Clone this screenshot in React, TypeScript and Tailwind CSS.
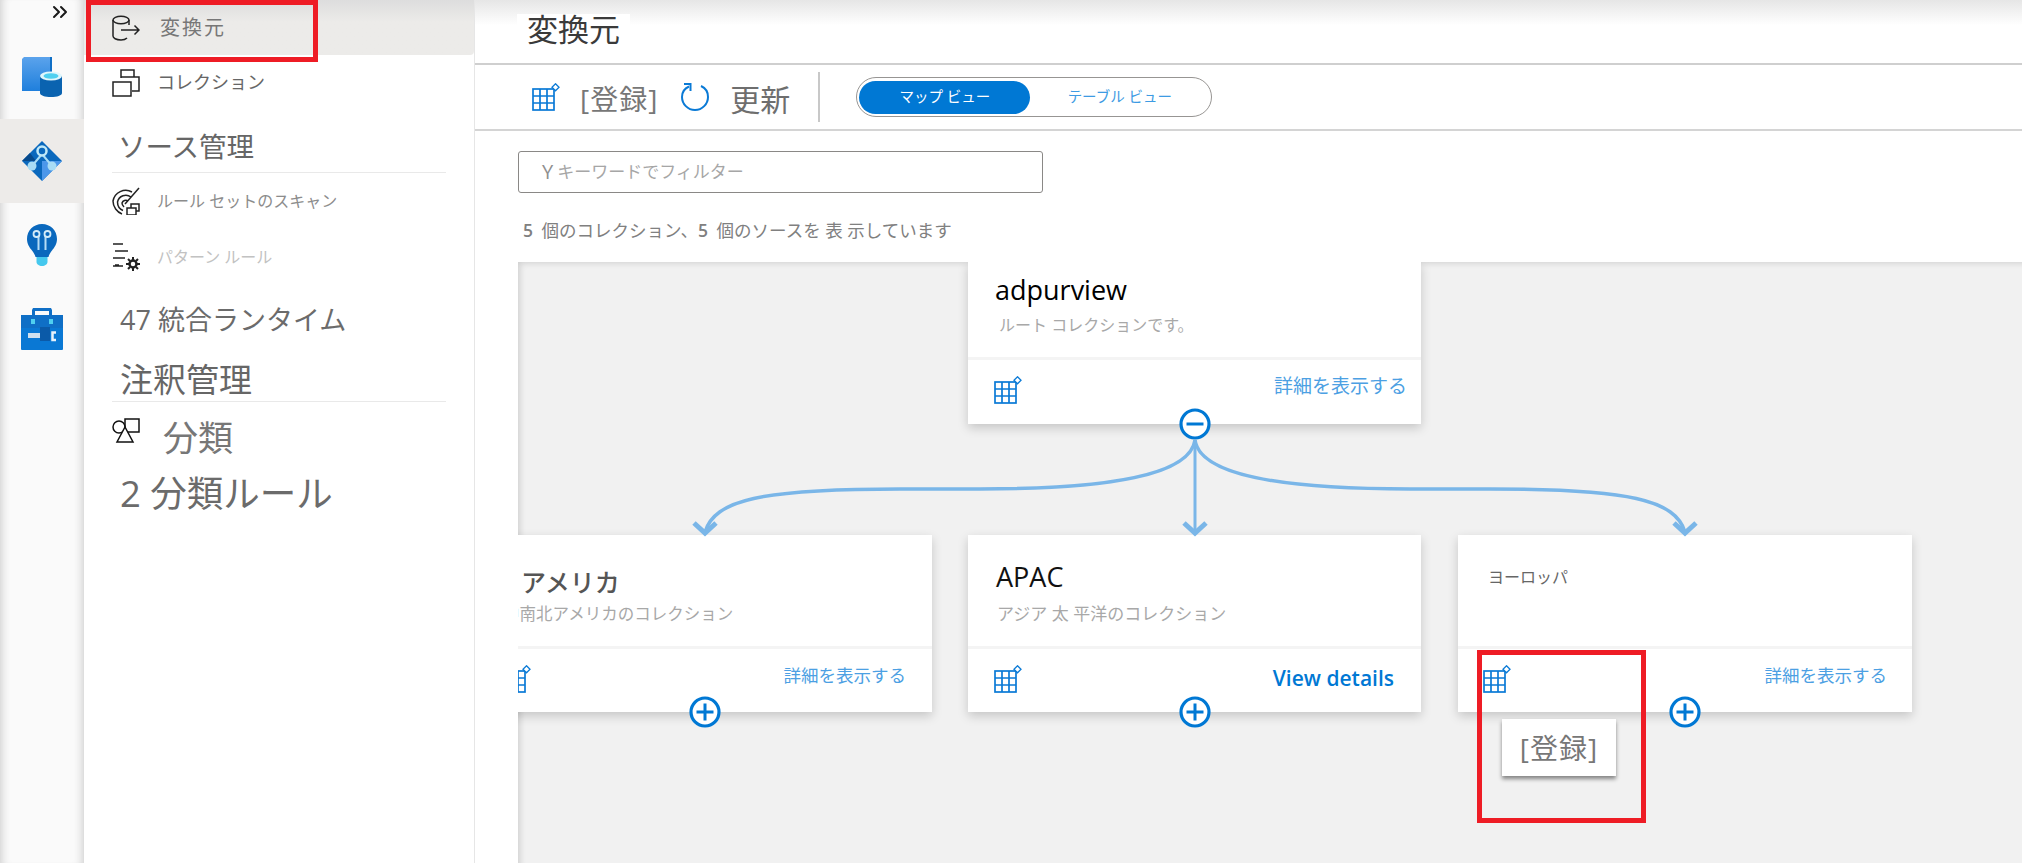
import React from "react";
import { ChevronsRight } from "lucide-react";

/* Small drawings */
const GridIcon = () => (
  <svg width="28" height="28" viewBox="0 0 28 28" fill="none" stroke="#0a7ad6" strokeWidth="1.700">
    <rect x="1" y="6" width="21" height="21" />
    <path d="M8 6v21M15 6v21M1 13h21M1 20h21" />
    <path d="M23.500 0.800l3.500 3.500-3.500 3.500-3.500-3.500z" strokeWidth="1.300" fill="#fff" />
  </svg>
);

const CircleBtn = ({ minus }: { minus?: boolean }) => (
  <svg width="32" height="32" viewBox="0 0 32 32" fill="none">
    <circle cx="16" cy="16" r="14" fill="#fff" stroke="#0078d4" strokeWidth="3.200" />
    <path d={minus ? "M7.500 16h17" : "M7.500 16h17M16 7.500v17"} stroke="#0078d4" strokeWidth="3" />
  </svg>
);

const BookDb = () => (
  <svg width="42" height="42" viewBox="0 0 42 42">
    <defs>
      <linearGradient id="bk" x1="0" y1="0" x2="0" y2="1">
        <stop offset="0" stopColor="#5ba3ec" />
        <stop offset="1" stopColor="#1f7fdc" />
      </linearGradient>
    </defs>
    <path d="M1 3l2-2h26v34H1z" fill="url(#bk)" />
    <path d="M29 1h2v24h-2z" fill="#0f6fc6" />
    <path d="M19 20v17c0 2.500 5 4 11 4s11-1.500 11-4V20z" fill="#0a63b0" />
    <ellipse cx="30" cy="20" rx="11" ry="4.500" fill="#dff6fc" />
    <ellipse cx="30" cy="20" rx="7.500" ry="2.800" fill="#4fd0f0" />
  </svg>
);

const DiamondIcon = () => (
  <svg width="42" height="42" viewBox="0 0 42 42">
    <path d="M21 1l20 20-20 20L1 21z" fill="#0a68bd" />
    <path d="M21 21l20 0-20 20z" fill="#4c97ea" />
    <path d="M1 21l8-8 6 8z" fill="#074a8c" />
    <path d="M21 14L11 26M21 14l10 12" stroke="#a8dcf5" strokeWidth="2" fill="none" />
    <circle cx="21" cy="11" r="4.500" fill="#0a68bd" stroke="#bfe8f8" strokeWidth="2.500" />
    <circle cx="11" cy="26" r="4.500" fill="#a8dcf5" />
    <circle cx="31" cy="26" r="4.500" fill="#a8dcf5" />
  </svg>
);

const BulbIcon = () => (
  <svg width="30" height="42" viewBox="0 0 30 42">
    <path d="M15 0C6.500 0 0 6.500 0 15c0 5 2.500 8.500 5 11.500 2 2.500 3 4.500 3.500 6.500h13c.5-2 1.500-4 3.500-6.500 2.500-3 5-6.500 5-11.500C30 6.500 23.500 0 15 0z" fill="#0a68bd" />
    <path d="M9.500 33h11v5c0 2-2.500 4-5.500 4s-5.500-2-5.500-4z" fill="#45c8ee" />
    <path d="M11.500 12v14M18.500 12v14" stroke="#b5dcf5" strokeWidth="2" />
    <circle cx="9.500" cy="10" r="3" fill="none" stroke="#d5ecf9" strokeWidth="1.800" />
    <circle cx="20.500" cy="10" r="3" fill="none" stroke="#d5ecf9" strokeWidth="1.800" />
  </svg>
);

const ToolboxIcon = () => (
  <svg width="42" height="42" viewBox="0 0 42 42">
    <path d="M11 7V2l1-2h18l1 2v5h-3V3H14v4z" fill="#0f6fc6" />
    <rect x="0" y="7" width="42" height="35" rx="1" fill="#0a78d4" />
    <rect x="0" y="7" width="42" height="13" fill="#0f6fc6" />
    <rect x="19" y="19" width="10" height="14" fill="#0b5aa8" />
    <rect x="10" y="11" width="4" height="5" fill="#4fd0f0" />
    <rect x="28" y="11" width="4" height="5" fill="#4fd0f0" />
    <rect x="7" y="25" width="12" height="5" fill="#cfe0ef" />
    <path d="M35 24.500h-3.500v7.500h3.500" fill="none" stroke="#e8f2fa" strokeWidth="2.500" />
  </svg>
);

const SourceIcon = () => (
  <svg width="28" height="26" viewBox="0 0 28 26" fill="none" stroke="#222" strokeWidth="1.500">
    <path d="M1 5v16c0 2 3 4 8 4 3 0 5-1 6-2" />
    <path d="M17 10V5" />
    <ellipse cx="9" cy="5" rx="8" ry="3.800" />
    <path d="M9 15h18M22.500 10.500L27 15l-4.500 4.500" />
  </svg>
);

const CollectionIcon = () => (
  <svg width="28" height="28" viewBox="0 0 28 28" fill="none" stroke="#222" strokeWidth="1.500">
    <path d="M9 9V1h13v7" />
    <path d="M9 8h18v14h-7" />
    <rect x="1" y="13" width="18" height="14" />
  </svg>
);

const ScanIcon = () => (
  <svg width="28" height="28" viewBox="0 0 28 28" fill="none" stroke="#222" strokeWidth="1.500">
    <path d="M20 5A13 13 0 0 0 1 14c0 6 4 11 9 13" />
    <path d="M19 10A8.500 8.500 0 0 0 5.500 15c0 4 2 7 5.500 8.500" />
    <path d="M16 14a4 4 0 0 0-6 2c0 2 1 3 2 4" />
    <path d="M13 17L27 1" />
    <rect x="19" y="17" width="8" height="7" fill="#fff" />
    <rect x="15" y="21" width="9" height="7" fill="#fff" />
  </svg>
);

const PatternIcon = () => (
  <svg width="28" height="28" viewBox="0 0 28 28" fill="none" stroke="#222" strokeWidth="1.500">
    <path d="M1 1h10M3 8h13M1 15h12M3 22h4M1 23h10" />
    <circle cx="21" cy="21" r="3.500" strokeWidth="2.500" />
    <path d="M21 14v3M21 25v3M14 21h3M25 21h3M16 16l2 2M24 24l2 2M26 16l-2 2M18 24l-2 2" strokeWidth="2" />
  </svg>
);

const ShapesIcon = () => (
  <svg width="28" height="25" viewBox="0 0 28 25" fill="none" stroke="#111" strokeWidth="1.500">
    <rect x="13" y="1" width="14" height="13" />
    <circle cx="7" cy="9" r="6" fill="#fff" />
    <path d="M13 9L5 24h16z" fill="#fff" />
  </svg>
);

const RefreshIcon = () => (
  <svg width="30" height="28" viewBox="0 0 30 28" fill="none" stroke="#0a7ad6" strokeWidth="2">
    <path d="M9 3.500C4.500 5.500 2 9 2 14c0 7 5.800 13 13 13s13-6 13-13c0-5-2.500-9-7-11" />
    <path d="M4 1h6.500v7" />
  </svg>
);

type Node = {
  pos: string;
  title: string;
  titleClass: string;
  sub: string;
  subClass: string;
  link: string;
  linkClass: string;
  footPad: string;
};

const nodes: Node[] = [
  {
    pos: "left-[450px] top-0 h-[162px] w-[453px]",
    title: "adpurview",
    titleClass: "pl-[27px] pt-[8px] text-[27px] font-medium leading-[40px] text-black",
    sub: "ルート コレクションです。",
    subClass: "pl-[31px] pt-[3px] h-[47px] text-[16px] leading-[24px] text-[#a8a8a8]",
    link: "詳細を表示する",
    linkClass: "-mt-[4px] text-[19px] text-[#4ca0e3]",
    footPad: "pl-[26px] pr-[14px]",
  },
  {
    pos: "-left-[39px] top-[273px] h-[177px] w-[453px]",
    title: "アメリカ",
    titleClass: "pl-[42px] pt-[27px] text-[25px] font-medium leading-[40px] text-[#555]",
    sub: "中南北アメリカのコレクション",
    subClass: "pl-[24px] h-[44px] text-[16.500px] leading-[24px] text-[#a8a8a8]",
    link: "詳細を表示する",
    linkClass: "-mt-[3px] text-[17.500px] text-[#4ca0e3]",
    footPad: "pl-[24px] pr-[26px]",
  },
  {
    pos: "left-[450px] top-[273px] h-[177px] w-[453px]",
    title: "APAC",
    titleClass: "pl-[28px] pt-[22px] text-[27px] font-medium leading-[40px] text-[#111]",
    sub: "アジア 太 平洋のコレクション",
    subClass: "pl-[29px] h-[49px] pt-[5px] text-[17px] leading-[24px] text-[#a8a8a8]",
    link: "View details",
    linkClass: "-mt-[2px] text-[21px] font-semibold text-[#0078d4]",
    footPad: "pl-[26px] pr-[27px]",
  },
  {
    pos: "left-[940px] top-[273px] h-[177px] w-[454px]",
    title: "ヨーロッパ",
    titleClass: "pl-[30px] pt-[22px] text-[16px] leading-[40px] text-[#666]",
    sub: "",
    subClass: "h-[49px]",
    link: "詳細を表示する",
    linkClass: "-mt-[3px] text-[17.500px] text-[#4ca0e3]",
    footPad: "pl-[25px] pr-[25px]",
  },
];

const NodeCard = ({ n }: { n: Node }) => (
  <div className={`absolute ${n.pos} bg-white shadow-[0_4px_10px_rgba(0,0,0,0.18)]`}>
    <div className={`whitespace-nowrap ${n.titleClass}`}>{n.title}</div>
    <div className={`whitespace-nowrap ${n.subClass}`}>{n.sub}</div>
    <div className="h-[3px] bg-[#f4f4f4]" />
    <div className={`flex items-start justify-between pt-[16px] ${n.footPad}`}>
      <GridIcon />
      <span className={n.linkClass}>{n.link}</span>
    </div>
  </div>
);

const Connectors = () => (
  <svg className="absolute left-0 top-0" width="1504" height="601" viewBox="518 262 1504 601" fill="none" stroke="#7ab6e8" strokeWidth="3.500">
    <path d="M1195 440C1190 475 1110 489 980 489H900C760 489 715 500 705 532" />
    <path d="M1195 440V532" strokeWidth="3" />
    <path d="M1195 440C1200 475 1280 489 1410 489H1490C1630 489 1675 500 1685 532" />
    <path d="M694 523l11 10 11-10M1184 523l11 10 11-10M1674 523l11 10 11-10" strokeWidth="5" />
  </svg>
);

export default function App() {
  return (
    <div className="relative flex h-[863px] w-[2022px] overflow-hidden bg-white font-['Open_Sans','Noto_Sans_CJK_JP',sans-serif]">
      {/* Icon rail */}
      <aside className="flex w-[84px] shrink-0 flex-col bg-[#fafafa] shadow-[inset_9px_0_9px_-7px_#cfcfcf,inset_-9px_0_9px_-7px_#cfcfcf]">
        <div className="flex h-[35px] justify-end pr-[12px]">
          <ChevronsRight size={24} strokeWidth={2} className="text-[#1a1a1a]" />
        </div>
        <div className="flex h-[84px] items-center justify-center">
          <BookDb />
        </div>
        <div className="flex h-[84px] items-center justify-center bg-[#edebe9]">
          <DiamondIcon />
        </div>
        <div className="flex h-[84px] items-center justify-center">
          <BulbIcon />
        </div>
        <div className="flex h-[84px] items-center justify-center">
          <ToolboxIcon />
        </div>
      </aside>

      {/* Menu */}
      <nav className="w-[391px] shrink-0 border-r border-[#e6e6e6]">
        <div className="flex h-[55px] items-center gap-[20px] rounded-br bg-gradient-to-b from-[#dddddd] to-[#ecebe9] to-40% pl-[28px]">
          <SourceIcon />
          <span className="text-[20px] tracking-[2px] text-[#777]">変換元</span>
        </div>
        <div className="flex h-[55px] items-center gap-[19px] pl-[28px]">
          <CollectionIcon />
          <span className="-ml-[2px] text-[18px] text-[#666]">コレクション</span>
        </div>
        <div className="mx-[28px] flex h-[63px] items-end border-b border-[#e9e9e9] pb-[5px] pl-[6px] text-[27.500px] leading-[40px] text-[#666]">
          ソース管理
        </div>
        <div className="flex h-[55px] items-center gap-[17px] pl-[28px]">
          <ScanIcon />
          <span className="text-[16px] text-[#8c8c8c]">ルール セットのスキャン</span>
        </div>
        <div className="flex h-[58px] items-center gap-[17px] pl-[28px]">
          <PatternIcon />
          <span className="text-[16px] text-[#c2c2c2]">パターン ルール</span>
        </div>
        <div className="flex h-[66px] items-center pl-[36px] pt-[2px] text-[27px] text-[#6b6b6b]">47 統合ランタイム</div>
        <div className="mx-[28px] flex h-[50px] items-end border-b border-[#e9e9e9] pl-[8px] text-[33px] leading-[42px] text-[#666]">
          注釈管理
        </div>
        <div className="flex h-[69px] items-start gap-[23px] pl-[28px] pt-[16px]">
          <ShapesIcon />
          <span className="-mt-[4px] text-[35px] leading-[48px] text-[#777]">分類</span>
        </div>
        <div className="flex h-[44px] items-center pl-[36px] text-[36.500px] text-[#6b6b6b]">2 分類ルール</div>
      </nav>

      {/* Content */}
      <main className="flex min-w-0 flex-1 flex-col">
        <header className="flex h-[65px] shrink-0 items-center border-b-2 border-[#cfcfcf] bg-gradient-to-b from-[#e6e6e6] to-white to-40% pb-[6px] pl-[42px]">
          <h1 className="bg-white px-[10px] text-[31px] leading-[30px] text-[#3a3a3a]">変換元</h1>
        </header>
        <div className="flex h-[66px] shrink-0 items-center border-b-2 border-[#d4d4d4] pl-[57px]">
          <GridIcon />
          <span className="ml-[20px] mt-[4px] text-[28px] tracking-[1px] text-[#777]">[登録]</span>
          <span className="ml-[22px]">
            <RefreshIcon />
          </span>
          <span className="ml-[20px] mt-[4px] text-[30px] text-[#6e6e6e]">更新</span>
          <span className="ml-[28px] h-[50px] w-[2px] bg-[#c8c8c8]" />
          <div className="ml-[36px] flex h-[40px] w-[356px] items-center rounded-full border border-[#979593] p-[2px]">
            <div className="flex h-[33px] w-[171px] items-center justify-center rounded-full bg-[#0078d4] text-[14.500px] text-white">
              マップ ビュー
            </div>
            <div className="flex-1 text-center text-[14.500px] text-[#3d9be3]">テーブル ビュー</div>
          </div>
        </div>
        <div className="h-[131px] shrink-0 pl-[43px] pt-[20px]">
          <div className="flex h-[42px] w-[525px] items-center rounded-[3px] border border-[#8a8886] pl-[23px] text-[17px] text-[#a6a6a6]">
            <span className="mr-[4px] text-[20px] text-[#8f8f8f]">Y</span>キーワードでフィルター
          </div>
          <p className="mt-[25px] pl-[5px] text-[17.500px] leading-[24px] text-[#808080]">
            <span className="mr-[4px] font-semibold">5</span> 個のコレクション、<span className="mr-[4px] font-semibold">5</span> 個のソースを 表 示しています
          </p>
        </div>

        {/* Collection map */}
        <div className="relative ml-[43px] flex-1 overflow-hidden bg-[#f1f1f1] shadow-[inset_5px_4px_6px_-3px_rgba(0,0,0,0.14)]">
          {nodes.map((n) => (
            <NodeCard key={n.title} n={n} />
          ))}
          <Connectors />
          <div className="absolute left-[661px] top-[146px]">
            <CircleBtn minus />
          </div>
          <div className="absolute left-[171px] top-[434px]">
            <CircleBtn />
          </div>
          <div className="absolute left-[661px] top-[434px]">
            <CircleBtn />
          </div>
          <div className="absolute left-[1151px] top-[434px]">
            <CircleBtn />
          </div>
          <div className="absolute left-[984px] top-[457px] flex h-[57px] w-[114px] items-center justify-center bg-white text-[28px] tracking-[1px] text-[#777] shadow-[0_3px_4px_rgba(0,0,0,0.45)]">
            [登録]
          </div>
        </div>
      </main>

      {/* Red callouts */}
      <div className="absolute left-[86px] top-0 h-[62px] w-[232px] border-[5px] border-[#ee1c25]" />
      <div className="absolute left-[1477px] top-[650px] h-[173px] w-[169px] border-[5px] border-[#ee1c25]" />
    </div>
  );
}
